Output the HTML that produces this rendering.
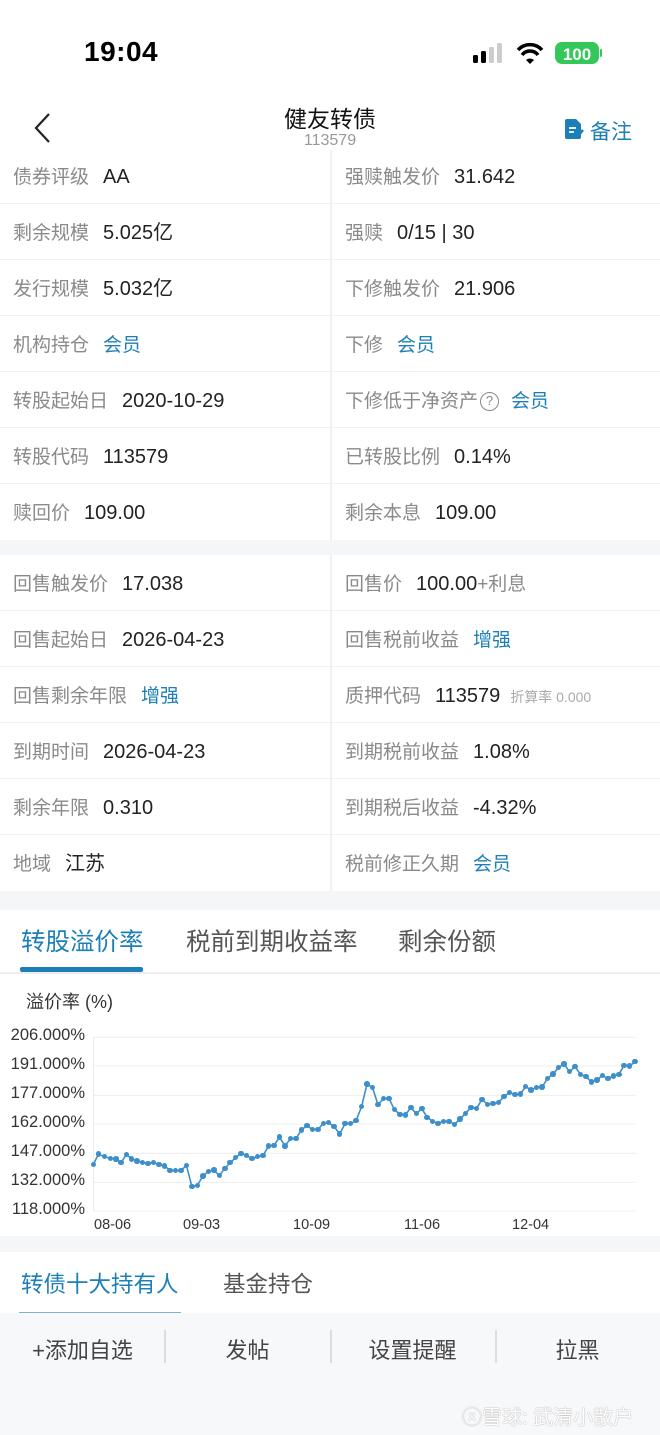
<!DOCTYPE html>
<html><head><meta charset="utf-8"><style>
*{margin:0;padding:0;box-sizing:border-box}
body{width:660px;height:1435px;position:relative;background:#fff;font-family:"Liberation Sans","Noto Sans CJK SC",sans-serif;overflow:hidden;color:#222}
.a{position:absolute}
.row{position:absolute;left:0;width:660px;height:56px;border-bottom:1.5px solid #f0f1f3}
.c{position:absolute;top:0;height:56px;line-height:59px;font-size:19px;white-space:nowrap}
.l{left:13px}.r{left:345px}
.k{color:#8a8a8a;margin-right:14px}
.v{color:#222;font-size:20px}
.b{color:#1d7fb8}
.vd{position:absolute;left:330px;width:1.5px;background:#f0f1f3}
.yl{position:absolute;left:0;width:85px;text-align:right;font-size:16.5px;color:#333}
.xl{position:absolute;top:1217px;font-size:14.5px;color:#333}
.dot{position:absolute;width:5.5px;height:5.5px;border-radius:50%;background:#3d8fcb;margin:-2.75px 0 0 -2.75px}
</style></head><body>
<!-- status bar -->
<div class="a" style="left:84px;top:36px;font-size:28px;font-weight:bold;color:#000;letter-spacing:0.5px">19:04</div>
<svg class="a" style="left:470px;top:40px" width="135" height="28">
<rect x="3" y="15" width="5" height="8" rx="1.5" fill="#000"/>
<rect x="11" y="11" width="5" height="12" rx="1.5" fill="#000"/>
<rect x="19" y="7" width="5" height="16" rx="1.5" fill="#ccc"/>
<rect x="27" y="3" width="5" height="20" rx="1.5" fill="#ccc"/>
<path d="M48 10 A16 16 0 0 1 72 10" stroke="#000" stroke-width="3.5" fill="none"/>
<path d="M52 15 A10 10 0 0 1 68 15" stroke="#000" stroke-width="3.5" fill="none"/>
<path d="M56 20 L60 24 L64 20 A6 6 0 0 0 56 20Z" fill="#000"/>
<rect x="85" y="2" width="44" height="22" rx="7" fill="#34c759"/>
<rect x="130" y="9" width="2" height="8" rx="1" fill="#34c759"/>
<text x="107" y="20" font-size="17" font-weight="bold" fill="#fff" text-anchor="middle" font-family="Liberation Sans">100</text>
</svg>
<!-- header -->
<svg class="a" style="left:32px;top:112px" width="20" height="32"><path d="M17 2 L4 16 L17 30" stroke="#222" stroke-width="2.2" fill="none"/></svg>
<div class="a" style="left:0;width:660px;top:100px;text-align:center;font-size:23px;color:#111">健友转债</div>
<div class="a" style="left:0;width:660px;top:132px;text-align:center;font-size:16px;color:#999">113579</div>
<svg class="a" style="left:565px;top:118px" width="20" height="22"><path d="M2 1 H11 L16 6 V19 Q16 21 14 21 H2 Q0 21 0 19 V3 Q0 1 2 1Z" fill="#1d7fb8"/><path d="M4 10 H11 M4 14 H9" stroke="#fff" stroke-width="1.8"/><path d="M11 20 L18 12" stroke="#1d7fb8" stroke-width="2.5"/></svg>
<div class="a" style="left:590px;top:116px;font-size:21px;color:#1d7fb8">备注</div>

<!-- section 1 -->
<div class="vd" style="top:150px;height:390px"></div>
<div class="row" style="top:148px"><div class="c l"><span class="k">债券评级</span><span class="v">AA</span></div><div class="c r"><span class="k">强赎触发价</span><span class="v">31.642</span></div></div>
<div class="row" style="top:204px"><div class="c l"><span class="k">剩余规模</span><span class="v">5.025亿</span></div><div class="c r"><span class="k">强赎</span><span class="v">0/15 | 30</span></div></div>
<div class="row" style="top:260px"><div class="c l"><span class="k">发行规模</span><span class="v">5.032亿</span></div><div class="c r"><span class="k">下修触发价</span><span class="v">21.906</span></div></div>
<div class="row" style="top:316px"><div class="c l"><span class="k">机构持仓</span><span class="b">会员</span></div><div class="c r"><span class="k">下修</span><span class="b">会员</span></div></div>
<div class="row" style="top:372px"><div class="c l"><span class="k">转股起始日</span><span class="v">2020-10-29</span></div><div class="c r"><span class="k" style="margin-right:2px">下修低于净资产</span><span style="display:inline-block;width:19px;height:19px;border:1.5px solid #888;border-radius:50%;font-size:13px;line-height:16px;text-align:center;color:#888;vertical-align:2px;margin-right:12px">?</span><span class="b">会员</span></div></div>
<div class="row" style="top:428px"><div class="c l"><span class="k">转股代码</span><span class="v">113579</span></div><div class="c r"><span class="k">已转股比例</span><span class="v">0.14%</span></div></div>
<div class="row" style="top:484px;border:none"><div class="c l"><span class="k">赎回价</span><span class="v">109.00</span></div><div class="c r"><span class="k">剩余本息</span><span class="v">109.00</span></div></div>
<div class="a" style="top:540px;left:0;width:660px;height:15px;background:#f5f6f8"></div>

<!-- section 2 -->
<div class="vd" style="top:555px;height:336px"></div>
<div class="row" style="top:555px"><div class="c l"><span class="k">回售触发价</span><span class="v">17.038</span></div><div class="c r"><span class="k">回售价</span><span class="v">100.00</span><span class="k">+利息</span></div></div>
<div class="row" style="top:611px"><div class="c l"><span class="k">回售起始日</span><span class="v">2026-04-23</span></div><div class="c r"><span class="k">回售税前收益</span><span class="b">增强</span></div></div>
<div class="row" style="top:667px"><div class="c l"><span class="k">回售剩余年限</span><span class="b">增强</span></div><div class="c r"><span class="k">质押代码</span><span class="v">113579</span><span style="color:#aaa;font-size:14px;margin-left:10px">折算率 0.000</span></div></div>
<div class="row" style="top:723px"><div class="c l"><span class="k">到期时间</span><span class="v">2026-04-23</span></div><div class="c r"><span class="k">到期税前收益</span><span class="v">1.08%</span></div></div>
<div class="row" style="top:779px"><div class="c l"><span class="k">剩余年限</span><span class="v">0.310</span></div><div class="c r"><span class="k">到期税后收益</span><span class="v">-4.32%</span></div></div>
<div class="row" style="top:835px;border:none"><div class="c l"><span class="k">地域</span><span class="v">江苏</span></div><div class="c r"><span class="k">税前修正久期</span><span class="b">会员</span></div></div>
<div class="a" style="top:891px;left:0;width:660px;height:19px;background:#f5f6f8"></div>

<!-- tabs -->
<div class="a" style="left:21px;top:923px;font-size:24.5px;color:#1d7fb8">转股溢价率</div>
<div class="a" style="left:186px;top:923px;font-size:24.5px;color:#555">税前到期收益率</div>
<div class="a" style="left:398px;top:923px;font-size:24.5px;color:#555">剩余份额</div>
<div class="a" style="left:20px;top:967px;width:123px;height:5px;background:#1d7fb8;border-radius:2px"></div>
<div class="a" style="left:0;top:972px;width:660px;height:1.5px;background:#eee"></div>

<!-- chart -->
<div class="a" style="left:26px;top:988px;font-size:18px;color:#333">溢价率 (%)</div>
<div class="yl" style="top:1026px">206.000%</div>
<div class="yl" style="top:1055px">191.000%</div>
<div class="yl" style="top:1084px">177.000%</div>
<div class="yl" style="top:1113px">162.000%</div>
<div class="yl" style="top:1142px">147.000%</div>
<div class="yl" style="top:1171px">132.000%</div>
<div class="yl" style="top:1200px">118.000%</div>
<div class="xl" style="left:94px">08-06</div>
<div class="xl" style="left:183px">09-03</div>
<div class="xl" style="left:293px">10-09</div>
<div class="xl" style="left:404px">11-06</div>
<div class="xl" style="left:512px">12-04</div>
<svg class="a" style="left:0;top:980px" width="660" height="250" viewBox="0 0 1568 750" preserveAspectRatio="none">
<g stroke="#ebebeb" stroke-width="2.5" vector-effect="non-scaling-stroke">
<line x1="222" y1="172" x2="1510" y2="172"/><line x1="222" y1="258" x2="1510" y2="258"/><line x1="222" y1="346" x2="1510" y2="346"/><line x1="222" y1="432" x2="1510" y2="432"/><line x1="222" y1="520" x2="1510" y2="520"/><line x1="222" y1="607" x2="1510" y2="607"/><line x1="222" y1="693" x2="1510" y2="693"/><line x1="222" y1="172" x2="222" y2="693"/>
</g>
<polyline id="pl" fill="none" stroke="#3d8fcb" stroke-width="1.6" vector-effect="non-scaling-stroke" points=""/>
</svg>
<div id="dots"></div>
<script>
(function(){var p="222,553 234,522 248,530 262,535 275,537 288,548 300,523 313,537 326,543 339,548 352,550 365,548 378,553 391,558 404,571 417,572 430,571 443,557 456,620 469,616 482,588 495,574 508,570 521,587 534,565 547,548 560,533 573,520 586,527 599,536 612,530 625,527 638,498 651,496 664,471 677,498 690,476 703,476 716,450 729,437 742,448 755,449 768,430 781,428 794,440 807,462 820,430 833,431 846,422 859,380 872,312 885,323 898,374 911,356 924,355 937,389 950,403 963,405 976,383 989,401 1002,386 1015,412 1028,424 1041,430 1054,424 1067,424 1080,433 1093,417 1106,400 1119,382 1132,386 1145,358 1158,373 1171,371 1184,368 1197,350 1210,338 1223,343 1236,342 1249,320 1262,330 1275,322 1288,321 1301,295 1314,282 1327,262 1340,252 1353,275 1366,260 1379,283 1392,290 1405,306 1418,300 1431,286 1444,296 1457,288 1470,283 1483,256 1496,258 1509,245";
document.getElementById("pl").setAttribute("points",p);
var s="";p.split(" ").forEach(function(q){var a=q.split(",");var x=a[0]*660/1568,y=980+a[1]/3;s+='<div class="dot" style="left:'+x.toFixed(1)+'px;top:'+y.toFixed(1)+'px"></div>';});document.getElementById("dots").innerHTML=s;})();
</script>
<div class="a" style="top:1236px;left:0;width:660px;height:16px;background:#f5f6f8"></div>

<!-- bottom tabs -->
<div class="a" style="left:21px;top:1267px;font-size:22.5px;color:#1d7fb8">转债十大持有人</div>
<div class="a" style="left:223px;top:1267px;font-size:22.5px;color:#555">基金持仓</div>
<div class="a" style="left:19px;top:1312px;width:162px;height:1.5px;background:#7fb3cf"></div>
<div class="a" style="top:1313px;left:0;width:660px;height:122px;background:#f7f8fa"></div>
<div class="a" style="left:0;width:165px;top:1333px;text-align:center;font-size:22px;color:#444">+添加自选</div>
<div class="a" style="left:165px;width:165px;top:1333px;text-align:center;font-size:22px;color:#444">发帖</div>
<div class="a" style="left:330px;width:165px;top:1333px;text-align:center;font-size:22px;color:#444">设置提醒</div>
<div class="a" style="left:495px;width:165px;top:1333px;text-align:center;font-size:22px;color:#444">拉黑</div>
<div class="a" style="left:164px;top:1330px;width:1.5px;height:33px;background:#ddd"></div>
<div class="a" style="left:330px;top:1330px;width:1.5px;height:33px;background:#ddd"></div>
<div class="a" style="left:495px;top:1330px;width:1.5px;height:33px;background:#ddd"></div>
<div class="a" style="left:462px;top:1401px;font-size:20px;color:#fff;text-shadow:0 0 1px #aaa,0 0 1px #aaa">ⓧ雪球: 武清小散户</div>
</body></html>
